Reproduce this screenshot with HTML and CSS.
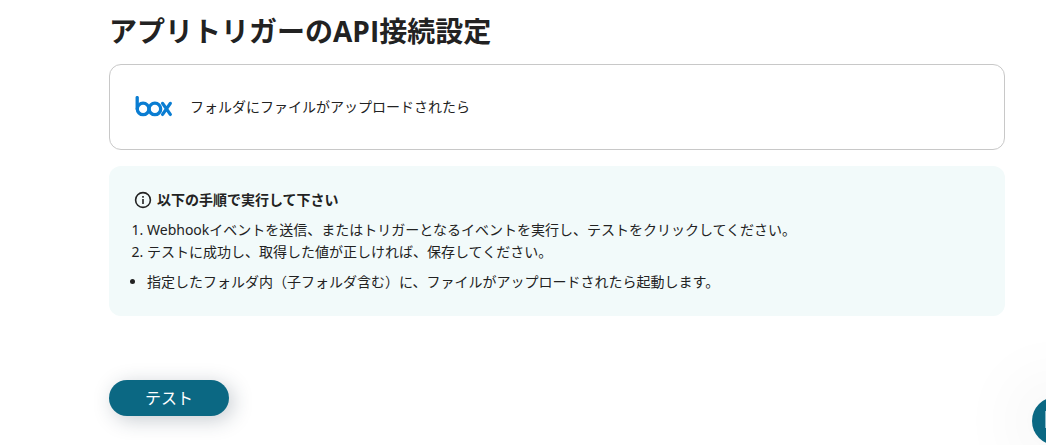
FILE: index.html
```html
<!DOCTYPE html>
<html lang="ja">
<head>
<meta charset="utf-8">
<meta name="viewport" content="width=device-width, initial-scale=1">
<title>アプリトリガーのAPI接続設定</title>
<link rel="stylesheet" href="styles.css">
</head>
<body>
<main class="page">
  <h1 class="title">アプリトリガーのAPI接続設定</h1>
  <section class="card">
    <svg class="logo" viewBox="0 0 38 22" role="img" aria-label="box" fill="none" stroke="#0a7dd2" stroke-width="3.3" stroke-linecap="round" stroke-linejoin="round">
      <path d="M2.2 1.6v11.2"/>
      <circle cx="8.1" cy="12.9" r="5.8"/>
      <circle cx="19.9" cy="12.9" r="5.8"/>
      <path d="M27.6 7.4l7.7 11M35.3 7.4l-7.7 11"/>
    </svg>
    <p class="card-text">フォルダにファイルがアップロードされたら</p>
  </section>
  <section class="notice">
    <h2 class="notice-title">
      <svg class="info" viewBox="0 0 18 18" aria-hidden="true">
        <circle cx="9" cy="9" r="7.4" fill="none" stroke="#222" stroke-width="1.6"/>
        <path d="M8.2 8h1.6v5H8.2zM8.2 5h1.6v1.7H8.2z" fill="#222"/>
      </svg>
      以下の手順で実行して下さい
    </h2>
    <ol class="steps">
      <li>Webhookイベントを送信、またはトリガーとなるイベントを実行し、テストをクリックしてください。</li>
      <li>テストに成功し、取得した値が正しければ、保存してください。</li>
    </ol>
    <ul class="notes">
      <li>指定したフォルダ内（子フォルダ含む）に、ファイルがアップロードされたら起動します。</li>
    </ul>
  </section>
  <button class="test" type="button">テスト</button>
</main>
<button class="chat" type="button" aria-label="チャット">
  <svg class="chat-icon" viewBox="0 0 22 22" aria-hidden="true"><path d="M1 2h20v18l-5-3H1z" fill="none" stroke="#8fbccb" stroke-width="2"/></svg>
</button>
</body>
</html>
```
FILE: styles.css
```css
* {
  box-sizing: border-box;
}

body {
  margin: 0;
  overflow: hidden;
  background: #fff;
  color: #222;
  font: 14px/22px "Noto Sans", "Noto Sans CJK JP", sans-serif;
}

.page {
  padding: 10px 41px 24px 109px;
}

.title {
  margin: 0 0 12px;
  font-family: "Open Sans", "Noto Sans CJK JP", sans-serif;
  font-size: 28px;
  line-height: 42px;
}

.card {
  display: flex;
  align-items: center;
  gap: 17px;
  padding: 31px 25px;
  border: 1px solid #c8c8c8;
  border-radius: 12px;
}

.logo {
  width: 38px;
  height: 22px;
}

.card-text {
  margin: 0;
}

.notice {
  margin: 16px 0 64px;
  padding: 23px 24px;
  border-radius: 12px;
  background: #f2fafa;
}

.notice-title {
  display: flex;
  align-items: center;
  gap: 5px;
  margin: 0 0 8px;
  font-size: 14px;
  line-height: 22px;
}

.info {
  width: 18px;
  height: 18px;
  margin-left: 1px;
}

.steps,
.notes {
  margin: 0;
  padding-left: 14px;
}

.notes {
  margin-top: 8px;
}

.test {
  width: 120px;
  height: 36px;
  padding: 0;
  border: 0;
  border-radius: 18px;
  background: #0b6883;
  box-shadow: 4px 4px 20px rgba(30, 50, 70, 0.25);
  color: #fff;
  font: 16px/24px "Noto Sans", "Noto Sans CJK JP", sans-serif;
}

.chat {
  position: fixed;
  right: -34px;
  bottom: 0;
  width: 48px;
  height: 48px;
  padding: 13px;
  border: 0;
  border-radius: 50%;
  background: #0b6883;
  box-shadow: 0 0 80px rgba(0, 0, 0, 0.14);
}

.chat-icon {
  display: block;
  width: 22px;
  height: 22px;
}
```
